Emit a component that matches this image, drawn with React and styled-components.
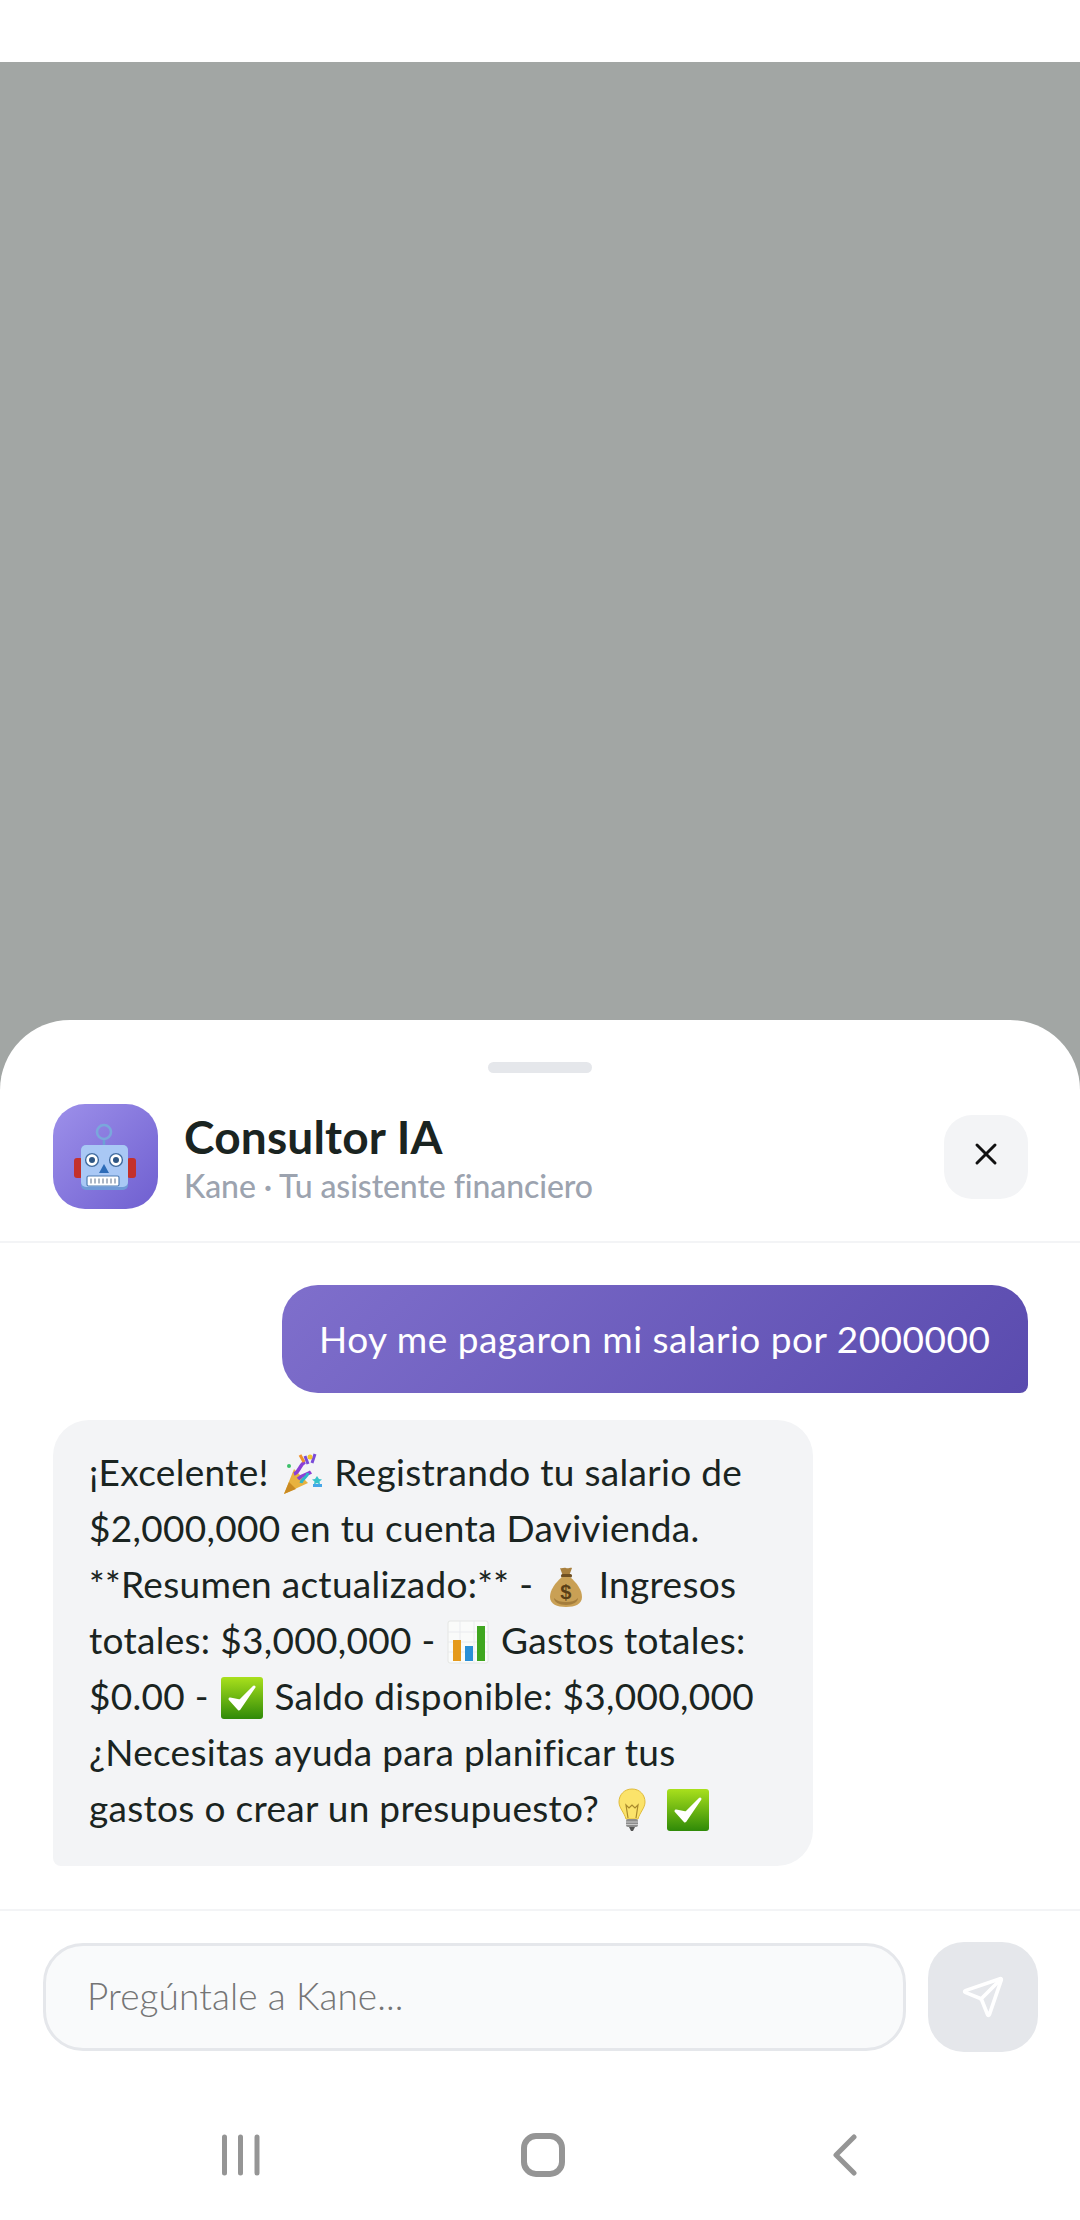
import styled, { createGlobalStyle } from "styled-components";
import { Send, X } from "lucide-react";

const GlobalStyle = createGlobalStyle`
  html, body { margin: 0; padding: 0; background: #fff; }
  * { box-sizing: border-box; }
  body { font-family: "Lato", "Liberation Sans", sans-serif; }
`;

const Page = styled.div`
  width: 1080px;
  height: 2220px;
  display: flex;
  flex-direction: column;
  background: #fff;
  overflow: hidden;
`;

const StatusBar = styled.div`
  height: 62px;
  flex-shrink: 0;
  background: #fff;
`;

const Backdrop = styled.div`
  flex: 1;
  display: flex;
  flex-direction: column;
  justify-content: flex-end;
  background: #a2a6a4;
`;

const Sheet = styled.section`
  display: flex;
  flex-direction: column;
  background: #fff;
  border-radius: 70px 70px 0 0;
  padding-top: 42px;
`;

const Handle = styled.div`
  width: 104px;
  height: 11px;
  margin: 0 auto 31px;
  border-radius: 6px;
  background: #e5e7eb;
`;

const Header = styled.header`
  display: flex;
  align-items: center;
  gap: 26px;
  padding: 0 52px 32px 53px;
  border-bottom: 2px solid #f3f4f6;
`;

const Avatar = styled.div`
  width: 105px;
  height: 105px;
  flex-shrink: 0;
  border-radius: 32px;
  overflow: hidden;
  background: linear-gradient(135deg, #9d90ea 0%, #6f5fd0 100%);
  svg { display: block; }
`;

const TitleBlock = styled.div`
  flex: 1;
  display: flex;
  flex-direction: column;
  gap: 2px;
`;

const Title = styled.h1`
  margin: 0;
  font-size: 46px;
  letter-spacing: 0.2px;
  line-height: 56px;
  font-weight: 700;
  color: #1a2421;
`;

const Subtitle = styled.p`
  margin: 0;
  font-size: 32px;
  letter-spacing: -0.1px;
  line-height: 38px;
  font-weight: 500;
  color: #9ca3af;
`;

const CloseButton = styled.button`
  width: 84px;
  height: 84px;
  display: flex;
  align-items: center;
  justify-content: center;
  padding: 0 0 5px;
  border: none;
  border-radius: 28px;
  background: #f3f4f6;
  color: #111;
`;

const Messages = styled.div`
  display: flex;
  flex-direction: column;
  gap: 27px;
  padding: 42px 52px 43px 53px;
`;

const Bubble = styled.div`
  white-space: nowrap;
  font-size: 37px;
  font-weight: 400;
  ${(p) =>
    p.$mine
      ? `
    align-self: flex-end;
    width: 746px;
    height: 108px;
    display: flex;
    align-items: center;
    padding: 0 0 2px 37px;
    letter-spacing: 0.5px;
    border-radius: 36px 36px 8px 36px;
    background: linear-gradient(135deg, #7f6fcc 0%, #5a4bae 100%);
    color: #fff;
  `
      : `
    align-self: flex-start;
    width: 760px;
    padding: 24px 36px 30px;
    letter-spacing: 0.3px;
    line-height: 56px;
    border-radius: 36px 36px 36px 8px;
    background: #f3f4f6;
    color: #1a2421;
  `}
`;

const Composer = styled.form`
  display: flex;
  align-items: center;
  gap: 22px;
  margin: 0;
  padding: 31px 42px 33px 43px;
  border-top: 2px solid #f3f4f6;
`;

const Field = styled.input`
  flex: 1;
  min-width: 0;
  height: 108px;
  padding: 0 41px 4px;
  border: 3px solid #e5e7eb;
  border-radius: 40px;
  background: #f9fafb;
  font-family: inherit;
  font-size: 37px;
  letter-spacing: 0.1px;
  font-weight: 300;
  outline: none;
  &::placeholder { color: #757575; opacity: 1; }
`;

const SendButton = styled.button`
  width: 110px;
  height: 110px;
  flex-shrink: 0;
  display: flex;
  align-items: center;
  justify-content: center;
  padding: 0;
  border: none;
  border-radius: 36px;
  background: #e5e7eb;
  color: #fff;
`;

const NavBar = styled.nav`
  height: 135px;
  display: grid;
  grid-template-columns: repeat(3, 302px);
  justify-content: center;
  align-items: center;
  justify-items: center;
  padding: 5px 0 0 6px;
  color: #959595;
`;

const EmojiBox = styled.svg`
  width: 44px;
  height: 44px;
  margin: 0 1px;
  vertical-align: -10px;
`;

const Robot = () => (
  <svg width="105" height="105" viewBox="0 0 105 105">
    <rect x="21" y="54" width="9" height="20" rx="3" fill="#c4302b" />
    <rect x="74" y="54" width="9" height="20" rx="3" fill="#c4302b" />
    <path d="M51 35v7" stroke="#6d9fd6" strokeWidth="2.5" />
    <circle cx="51" cy="28" r="7" fill="none" stroke="#7aa7dc" strokeWidth="2.6" />
    <rect x="28" y="41" width="47" height="45" rx="5" fill="#6f9ad8" />
    <rect x="28" y="41" width="47" height="42" rx="5" fill="#a9c8f5" />
    <circle cx="39" cy="56" r="6.4" fill="#fff" stroke="#3f6a9e" strokeWidth="1.4" />
    <circle cx="39" cy="56" r="3" fill="#2f5683" />
    <circle cx="63" cy="56" r="6.4" fill="#fff" stroke="#3f6a9e" strokeWidth="1.4" />
    <circle cx="63" cy="56" r="3" fill="#2f5683" />
    <path d="M51 60l5 9H46z" fill="#2d6cb8" />
    <rect x="34" y="72" width="32" height="10" rx="1.5" fill="#fff" stroke="#4f7cb3" strokeWidth="1.2" />
    <path d="M38 74.5v5M42 74.5v5M46 74.5v5M50 74.5v5M54 74.5v5M58 74.5v5M62 74.5v5" stroke="#8a99ad" strokeWidth="1.4" />
  </svg>
);

const Popper = () => (
  <EmojiBox viewBox="0 0 44 44">
    <path d="M4 42L14 17l14 14z" fill="#e8b23f" />
    <path d="M4 42l5-12 7 7z" fill="#c98a22" />
    <path d="M14 22c6-2 5-9 11-12M18 27c5-5 9-4 13-7" fill="none" stroke="#8b3fd6" strokeWidth="3.5" />
    <path d="M21 31c1-5 6-5 7-10" fill="none" stroke="#2fb6c9" strokeWidth="3" />
    <path d="M35 2l-3 9M28 12l-3-8" stroke="#7a4bd8" strokeWidth="3" />
    <path d="M20 3l4 7" stroke="#f0912c" strokeWidth="3" />
    <circle cx="30" cy="5" r="2.5" fill="#f4c430" />
    <circle cx="9" cy="14" r="2" fill="#3cc06a" />
    <path d="M37 24l2 3 3 .5-2.5 2 .5 3-3-1.5-3 1.5.5-3-2.5-2 3-.5z" fill="#35c3c9" />
    <path d="M33 32h9v3h-9z" fill="#45a6e8" />
  </EmojiBox>
);

const MoneyBag = () => (
  <EmojiBox viewBox="0 0 44 44">
    <path d="M16 4c2 1 4-1 6 0s5-1 6 0l-3 8h-6z" fill="#a9803e" />
    <rect x="17" y="10" width="11" height="3.5" rx="1.5" fill="#6f4f22" />
    <path d="M18 13h8c7 6 12 13 12 20 0 7-7 10-16 10S6 40 6 33c0-7 5-14 12-20z" fill="#c9a055" />
    <path d="M10 34c0 4 5 7 12 7s12-3 12-7c-3 3-7 4-12 4s-9-1-12-4z" fill="#a47d3c" />
    <text x="22" y="35" textAnchor="middle" fontSize="20" fontWeight="700" fontFamily="Liberation Sans" fill="#5a3f17">$</text>
  </EmojiBox>
);

const BarChart = () => (
  <EmojiBox viewBox="0 0 44 44">
    <rect x="2" y="1" width="40" height="42" rx="2" fill="#fafbfa" stroke="#e4e6e4" />
    <path d="M2 12h40M2 22h40M2 32h40M14 1v42M28 1v42" stroke="#e6e9ec" strokeWidth="0.8" />
    <rect x="7" y="20" width="8" height="21" fill="#e59a1c" />
    <rect x="19" y="26" width="8" height="15" fill="#2a8fd6" />
    <rect x="31" y="6" width="8" height="35" fill="#3fa61f" />
  </EmojiBox>
);

const CheckBox = () => (
  <EmojiBox viewBox="0 0 44 44">
    <defs>
      <linearGradient id="checkFill" x1="0" y1="0" x2="0" y2="1">
        <stop offset="0" stopColor="#a9e01c" />
        <stop offset="1" stopColor="#2f8a08" />
      </linearGradient>
    </defs>
    <rect x="1" y="1" width="42" height="42" rx="3" fill="url(#checkFill)" />
    <path d="M10 23l9 10 15-22-14 14z" fill="#fff" stroke="#fff" strokeWidth="3" strokeLinejoin="round" />
  </EmojiBox>
);

const Bulb = () => (
  <EmojiBox viewBox="0 0 44 44">
    <path d="M22 1c8 0 13 6 13 13 0 6-5 10-7 17H16c-2-7-7-11-7-17C9 7 14 1 22 1z" fill="#fbe36a" stroke="#e0bb3a" strokeWidth="1" />
    <path d="M18 30l-2-13 3 3 3-3 3 3 3-3-2 13" fill="none" stroke="#a98a2c" strokeWidth="1.2" />
    <rect x="16" y="31" width="12" height="8" rx="2" fill="#8c8c8c" />
    <path d="M16 34h12M16 36.5h12" stroke="#c9c9c9" />
    <path d="M19 39h6l-2 4h-2z" fill="#555" />
  </EmojiBox>
);

const NavLines = () => (
  <svg width="40" height="42" viewBox="0 0 40 42" fill="none" stroke="currentColor" strokeWidth="5" strokeLinecap="round">
    <path d="M3.5 3v36M19.5 3v36M36 3v36" />
  </svg>
);

const NavHome = () => (
  <svg width="44" height="44" viewBox="0 0 44 44" fill="none" stroke="currentColor" strokeWidth="6">
    <rect x="3" y="3" width="38" height="38" rx="12" />
  </svg>
);

const NavBack = () => (
  <svg width="26" height="42" viewBox="0 0 26 42" fill="none" stroke="currentColor" strokeWidth="5" strokeLinecap="round" strokeLinejoin="round">
    <path d="M22 3L4 21l18 18" />
  </svg>
);

export default function App() {
  return (
    <Page>
      <GlobalStyle />
      <StatusBar />
      <Backdrop>
        <Sheet>
          <Handle />
          <Header>
            <Avatar>
              <Robot />
            </Avatar>
            <TitleBlock>
              <Title>Consultor IA</Title>
              <Subtitle>Kane · Tu asistente financiero</Subtitle>
            </TitleBlock>
            <CloseButton type="button" aria-label="Cerrar">
              <X size={36} strokeWidth={2} />
            </CloseButton>
          </Header>
          <Messages>
            <Bubble $mine>Hoy me pagaron mi salario por 2000000</Bubble>
            <Bubble>
              ¡Excelente! <Popper /> Registrando tu salario de
              <br />
              $2,000,000 en tu cuenta Davivienda.
              <br />
              **Resumen actualizado:** - <MoneyBag /> Ingresos
              <br />
              totales: $3,000,000 - <BarChart /> Gastos totales:
              <br />
              $0.00 - <CheckBox /> Saldo disponible: $3,000,000
              <br />
              ¿Necesitas ayuda para planificar tus
              <br />
              gastos o crear un presupuesto? <Bulb /> <CheckBox />
            </Bubble>
          </Messages>
          <Composer>
            <Field placeholder="Pregúntale a Kane..." />
            <SendButton type="button" aria-label="Enviar">
              <Send size={44} strokeWidth={2} />
            </SendButton>
          </Composer>
          <NavBar>
            <NavLines />
            <NavHome />
            <NavBack />
          </NavBar>
        </Sheet>
      </Backdrop>
    </Page>
  );
}
